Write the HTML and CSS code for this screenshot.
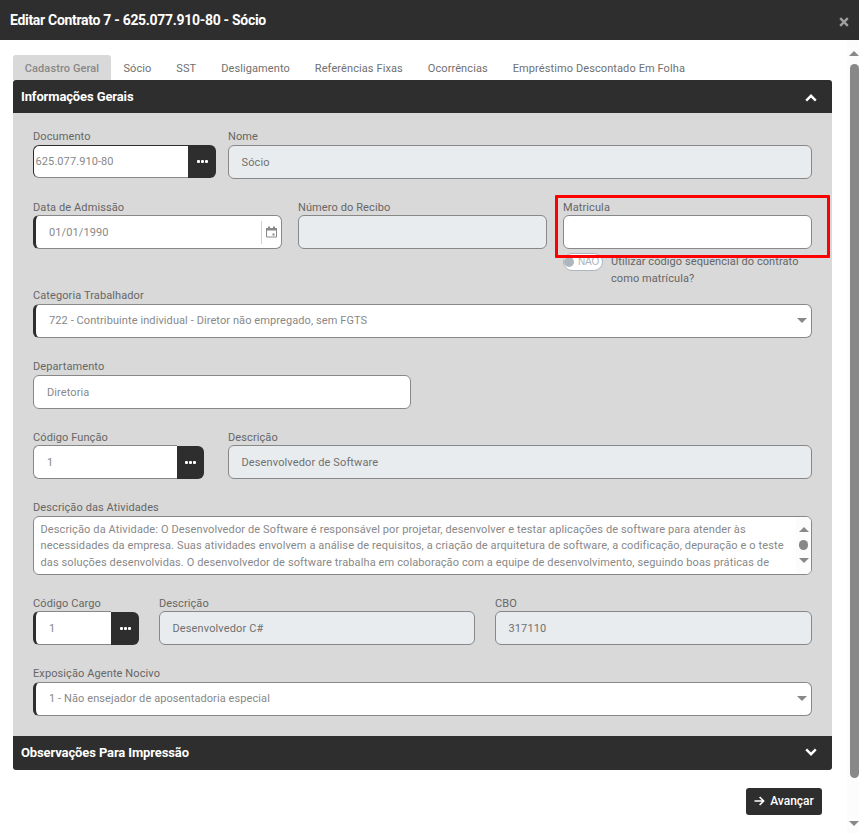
FILE: index.html
```html
<!DOCTYPE html>
<html lang="pt-BR">
<head>
<meta charset="utf-8">
<title>Editar Contrato</title>
<link rel="stylesheet" href="styles.css">
</head>
<body>
<div class="modal">
  <header class="modal-header">
    <h1 class="modal-title">Editar Contrato 7 - 625.077.910-80 - Sócio</h1>
    <svg class="close" viewBox="0 0 10 10"><path d="M1.2 1.2 8.8 8.8M8.8 1.2 1.2 8.8"/></svg>
  </header>
  <div class="modal-body">
    <main class="content">
      <nav class="tabs">
        <a class="tab tab-active">Cadastro Geral</a>
        <a class="tab">Sócio</a>
        <a class="tab">SST</a>
        <a class="tab">Desligamento</a>
        <a class="tab">Referências Fixas</a>
        <a class="tab">Ocorrências</a>
        <a class="tab">Empréstimo Descontado Em Folha</a>
      </nav>
      <section class="panel">
        <div class="panel-header panel-top">
          <span>Informações Gerais</span>
          <svg class="chevron" viewBox="0 0 12 8"><path d="M1.2 6.6 6 1.8 10.8 6.6"/></svg>
        </div>
        <div class="panel-body">
          <div class="row row-person">
            <div class="field">
              <span class="label">Documento</span>
              <div class="group group-doc">
                <div class="input focused">625.077.910-80</div>
                <div class="lookup"><i></i><i></i><i></i></div>
              </div>
            </div>
            <div class="field">
              <span class="label">Nome</span>
              <div class="input readonly">Sócio</div>
            </div>
          </div>
          <div class="row row-dates">
            <div class="field">
              <span class="label low">Data de Admissão</span>
              <div class="input required date">
                <span>01/01/1990</span>
                <span class="picker">
                  <svg viewBox="0 0 11 12"><path class="outline" d="M.5 2.5H10.5V11H.5Z"/><path class="solid" d="M0 2H11V4.5H0ZM2 .5H4V3H2ZM7 .5H9V3H7ZM6.5 7.5H8.5V9.5H6.5Z"/></svg>
                </span>
              </div>
            </div>
            <div class="field">
              <span class="label low">Número do Recibo</span>
              <div class="input readonly"></div>
            </div>
            <div class="field field-marked">
              <span class="label low">Matricula</span>
              <div class="input"></div>
              <div class="toggle-line">
                <span class="toggle"><i class="knob"></i>NÃO</span>
                <span class="toggle-text">Utilizar código sequencial do contrato como matrícula?</span>
              </div>
              <div class="marker"></div>
            </div>
          </div>
          <div class="field cat">
            <span class="label">Categoria Trabalhador</span>
            <div class="input required select"><span>722 - Contribuinte individual - Diretor não empregado, sem FGTS</span><i class="caret"></i></div>
          </div>
          <div class="field dept">
            <span class="label">Departamento</span>
            <div class="input">Diretoria</div>
          </div>
          <div class="row row-role">
            <div class="field">
              <span class="label low">Código Função</span>
              <div class="group group-role">
                <div class="input">1</div>
                <div class="lookup"><i></i><i></i><i></i></div>
              </div>
            </div>
            <div class="field">
              <span class="label low">Descrição</span>
              <div class="input readonly">Desenvolvedor de Software</div>
            </div>
          </div>
          <div class="field activities">
            <span class="label">Descrição das Atividades</span>
            <div class="textarea">
              <p>Descrição da Atividade: O Desenvolvedor de Software é responsável por projetar, desenvolver e testar aplicações de software para atender às<br>necessidades da empresa. Suas atividades envolvem a análise de requisitos, a criação de arquitetura de software, a codificação, depuração e o teste<br>das soluções desenvolvidas. O desenvolvedor de software trabalha em colaboração com a equipe de desenvolvimento, seguindo boas práticas de</p>
              <div class="mini-scroll"><i class="arrow-up"></i><i class="dot"></i><i class="arrow-down"></i></div>
            </div>
          </div>
          <div class="row row-job">
            <div class="field">
              <span class="label low">Código Cargo</span>
              <div class="group group-job">
                <div class="input required">1</div>
                <div class="lookup"><i></i><i></i><i></i></div>
              </div>
            </div>
            <div class="field">
              <span class="label low">Descrição</span>
              <div class="input readonly">Desenvolvedor C#</div>
            </div>
            <div class="field">
              <span class="label low">CBO</span>
              <div class="input readonly">317110</div>
            </div>
          </div>
          <div class="field">
            <span class="label">Exposição Agente Nocivo</span>
            <div class="input required select"><span>1 - Não ensejador de aposentadoria especial</span><i class="caret"></i></div>
          </div>
        </div>
        <div class="panel-header panel-bottom">
          <span>Observações Para Impressão</span>
          <svg class="chevron" viewBox="0 0 12 8"><path d="M1.2 1.4 6 6.2 10.8 1.4"/></svg>
        </div>
      </section>
      <div class="actions">
        <button class="next"><svg viewBox="0 0 11 10"><path d="M.5 5H9.5M5.6 1 9.6 5 5.6 9"/></svg>Avançar</button>
      </div>
    </main>
    <aside class="scrollbar"><i class="arrow-up"></i><i class="thumb"></i><i class="arrow-down"></i></aside>
  </div>
</div>
</body>
</html>
```

FILE: styles.css
```css
* { box-sizing: border-box; }
body {
  margin: 0;
  background: #fff;
  font-family: Roboto, "Liberation Sans", sans-serif;
  font-size: 11px;
  letter-spacing: .1px;
  color: #666;
}
.modal { height: 833px; display: flex; flex-direction: column; overflow: hidden; }
.modal-header {
  height: 40px;
  flex: none;
  display: flex;
  align-items: center;
  justify-content: space-between;
  padding: 0 10px;
  background: #2e2e2e;
}
.modal-title { margin: 0; font-size: 14px; font-weight: 700; letter-spacing: -.3px; color: #fff; }
.close { width: 10px; height: 10px; margin-top: 3px; fill: none; stroke: #a0a0a0; stroke-width: 2.4; }
.modal-body { flex: 1; display: flex; min-height: 0; }
.content { width: 819px; margin: 15px 15px 0 13px; flex: none; }

.tabs { display: flex; height: 25px; }
.tab { padding: 0 12.45px; line-height: 27px; color: #707070; white-space: nowrap; }
.tab-active {
  width: 98px;
  padding: 0;
  text-align: center;
  background: #d9d9d9;
  color: #888;
  font-weight: 500;
  border-radius: 3px 3px 0 0;
}

.panel-header {
  display: flex;
  align-items: center;
  justify-content: space-between;
  padding: 0 15px 0 8px;
  background: #2e2e2e;
  color: #fff;
  font-size: 13px;
  font-weight: 700;
  letter-spacing: -.12px;
}
.panel-top { height: 33px; border-radius: 3px 3px 0 0; }
.panel-bottom { height: 34px; padding-bottom: 2px; border-radius: 0 0 3px 3px; }
.chevron { width: 12px; height: 8px; fill: none; stroke: #fff; stroke-width: 2.4; }
.panel-top .chevron { margin-top: 2px; }
.panel-body { height: 623px; padding: 14px 20px 0; background: #d9d9d9; }

.row { display: grid; }
.row-person { grid-template-columns: 183px 584px; gap: 12px; margin-bottom: 18px; }
.row-dates { grid-template-columns: repeat(3, 249px); gap: 16px; height: 89px; }
.row-role { grid-template-columns: 183px 584px; gap: 12px; margin-bottom: 19px; }
.row-job { grid-template-columns: 106px 316px 317px; gap: 20px; margin-bottom: 19px; }
.cat { margin-bottom: 19px; }
.dept { width: 378px; margin-bottom: 18px; }
.activities { margin-bottom: 18px; }

.field { position: relative; }
.label { display: block; height: 18px; line-height: 19px; color: #666; white-space: nowrap; }
.low { line-height: 21px; }
.input {
  height: 34px;
  border: 1px solid #888;
  border-radius: 6px;
  background: #fff;
  padding: 0 13px;
  line-height: 33px;
  color: #888;
  white-space: nowrap;
}
.required { border-left: 3px solid #2e2e2e; }
.readonly { padding-left: 12.5px; background: #e8ecef; color: #707070; letter-spacing: .13px; }
.group { display: flex; align-items: flex-end; }
.group .input { flex: 1; border-right: 0; border-radius: 6px 0 0 6px; }
.group-doc { width: 183px; height: 33px; }
.group-doc .input { height: 33px; padding-left: 1.6px; line-height: 31px; letter-spacing: .08px; }
.focused { border-top-color: #2e2e2e; border-left-color: #2e2e2e; }
.group-role { width: 171px; }
.group-role .lookup { width: 27px; }
.group-job { width: 106px; }
.lookup {
  width: 28px;
  height: 33px;
  display: flex;
  align-items: center;
  justify-content: center;
  gap: 1px;
  padding-bottom: 1px;
  background: #2e2e2e;
  border-radius: 0 6px 6px 0;
}
.lookup i { width: 3px; height: 3px; border-radius: 1px; background: #fff; }

.date { display: flex; justify-content: space-between; align-items: center; padding-right: 4px; }
.picker { height: 23px; display: flex; align-items: center; padding-left: 4px; border-left: 1px solid #d0d0d0; }
.picker svg { width: 11px; height: 12px; }
.outline { fill: none; stroke: #888; }
.solid { fill: #888; }

.toggle-line { display: flex; margin-top: 4px; gap: 8px; }
.toggle {
  flex: none;
  width: 40px;
  height: 18px;
  display: flex;
  align-items: center;
  gap: 4px;
  border: 1px solid #adb5bd;
  border-radius: 9px;
  background: #fff;
  color: #adb5bd;
  font-family: "Liberation Sans", sans-serif;
  font-size: 10px;
  line-height: 18px;
  letter-spacing: -.2px;
}
.knob { width: 10px; height: 10px; border-radius: 50%; background: #adb5bd; }
.toggle-text { line-height: 17px; width: 200px; letter-spacing: .08px; }
.marker {
  position: absolute;
  left: -8px;
  top: -2px;
  width: 275px;
  height: 63px;
  border: 3px solid #f00;
  border-radius: 1px;
}

.select { display: flex; justify-content: space-between; align-items: center; padding-right: 4px; letter-spacing: .09px; }
.select span { line-height: 32px; }
.caret { margin-bottom: 2px; border: 5px solid transparent; border-top: 5px solid #888; border-bottom: 0; }

.textarea {
  height: 59px;
  display: flex;
  justify-content: space-between;
  border: 1px solid #888;
  border-radius: 6px;
  background: #fff;
  overflow: hidden;
}
.textarea p { margin: 4.5px 0 0 6.5px; line-height: 16.5px; letter-spacing: .12px; color: #888; white-space: nowrap; }
.mini-scroll { flex: none; width: 15px; display: flex; flex-direction: column; align-items: center; padding-top: 10px; background: #fcfcfc; }
.arrow-up { border: 5px solid transparent; border-bottom: 5px solid #888; border-top: 0; }
.arrow-down { border: 5px solid transparent; border-top: 5px solid #888; border-bottom: 0; }
.dot { width: 9px; height: 10px; margin: 8px 0; border-radius: 5px; background: #888; }

.actions { display: flex; justify-content: flex-end; padding: 18px 10px 0; }
.next {
  width: 76px;
  height: 27px;
  display: flex;
  align-items: center;
  justify-content: center;
  gap: 5px;
  padding: 0 0 2px;
  border: 0;
  border-radius: 3px;
  background: #2e2e2e;
  color: #fff;
  font: 500 12px Roboto, "Liberation Sans", sans-serif;
}
.next svg { width: 11px; height: 10px; fill: none; stroke: #fff; stroke-width: 1.6; }

.scrollbar {
  width: 12px;
  display: flex;
  flex-direction: column;
  align-items: flex-end;
  padding: 11px 0 7px;
  background: #fcfcfc;
}
.thumb { width: 9px; height: 714px; margin: 8px 0 auto; border-radius: 5px; background: #888; }
```
